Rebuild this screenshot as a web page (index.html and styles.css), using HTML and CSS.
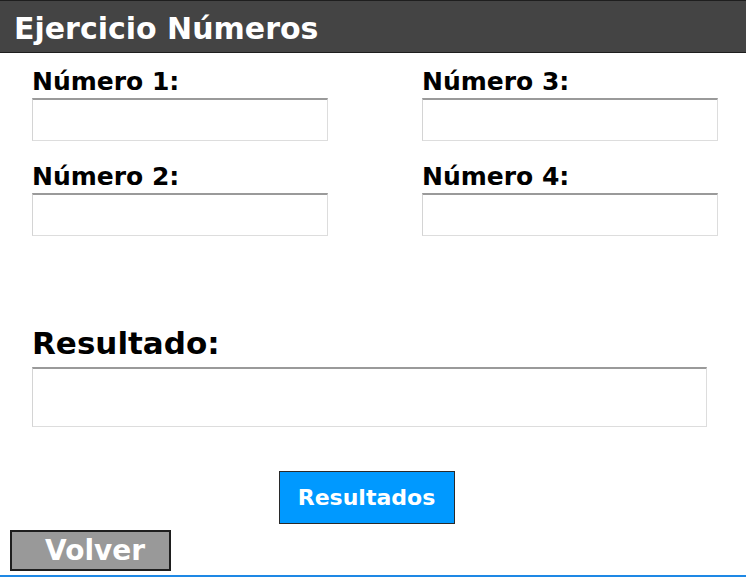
FILE: index.html
```html
<!DOCTYPE html>
<html lang="es">
<head>
<meta charset="utf-8">
<title>Ejercicio Números</title>
<link rel="stylesheet" href="styles.css">
</head>
<body>
<div class="page">
  <header class="topbar"><h1 class="title">Ejercicio Números</h1></header>
  <main class="form">
    <div class="grid">
      <div class="field">
        <label class="label" for="n1">Número 1:</label>
        <input class="box" id="n1" type="text">
      </div>
      <div class="field">
        <label class="label" for="n3">Número 3:</label>
        <input class="box" id="n3" type="text">
      </div>
      <div class="field">
        <label class="label" for="n2">Número 2:</label>
        <input class="box" id="n2" type="text">
      </div>
      <div class="field">
        <label class="label" for="n4">Número 4:</label>
        <input class="box" id="n4" type="text">
      </div>
    </div>
    <div class="result">
      <label class="result-label" for="res">Resultado:</label>
      <input class="box result-box" id="res" type="text">
    </div>
    <div class="actions">
      <button class="btn-primary" type="button">Resultados</button>
    </div>
  </main>
  <div class="back-row">
    <button class="btn-back" type="button">Volver</button>
  </div>
  <div class="bottom-line"></div>
</div>
</body>
</html>
```

FILE: styles.css
```css
* { box-sizing: border-box; }
html, body { margin: 0; padding: 0; background: #fff; }
body { font-family: "DejaVu Sans", Verdana, sans-serif; color: #000; }

.page { width: 746px; height: 577px; display: flex; flex-direction: column; overflow: hidden; }

.topbar {
  height: 53px;
  background: #444444;
  border-top: 1px solid #1e1e1e;
  border-bottom: 1px solid #1e1e1e;
  padding-left: 14px;
  display: flex;
  align-items: flex-start;
}
.title {
  margin: 0;
  margin-top: 11px;
  font-size: 30px;
  line-height: 34px;
  font-weight: bold;
  color: #fff;
}

.form { padding: 15px 0 0 32px; display: flex; flex-direction: column; }

.grid {
  display: grid;
  grid-template-columns: 296px 296px;
  column-gap: 94px;
  row-gap: 22px;
}
.field { display: flex; flex-direction: column; }
.label {
  font-size: 25px;
  line-height: 28px;
  font-weight: bold;
  margin-bottom: 2px;
}
.box {
  display: block;
  width: 296px;
  height: 43px;
  margin: 0;
  padding: 0 6px;
  border: 1px solid #dddddd;
  border-top: 2px solid #9a9a9a;
  border-left-color: #d4d4d4;
  background: #fff;
  font: 16px "DejaVu Sans", sans-serif;
  outline: none;
}

.result { display: flex; flex-direction: column; margin-top: 90px; }
.result-label {
  font-size: 31px;
  line-height: 34px;
  font-weight: bold;
  margin-bottom: 7px;
}
.result-box { width: 675px; height: 60px; }

.actions { width: 675px; display: flex; justify-content: center; margin-top: 44px; }
.btn-primary {
  width: 176px;
  height: 53px;
  margin-left: -6px;
  background: #0099ff;
  border: 1px solid #2a2a2a;
  color: #fff;
  font: bold 22px "DejaVu Sans", sans-serif;
  padding: 0;
}

.back-row { padding-left: 10px; margin-top: 6px; }
.btn-back {
  width: 161px;
  height: 41px;
  background: #999999;
  border: 2px solid #1e1e1e;
  color: #fff;
  font: bold 28px "DejaVu Sans", sans-serif;
  text-align: left;
  padding: 0 0 0 33px;
}

.bottom-line { margin-top: auto; height: 2px; background: #1e88e5; }
```
